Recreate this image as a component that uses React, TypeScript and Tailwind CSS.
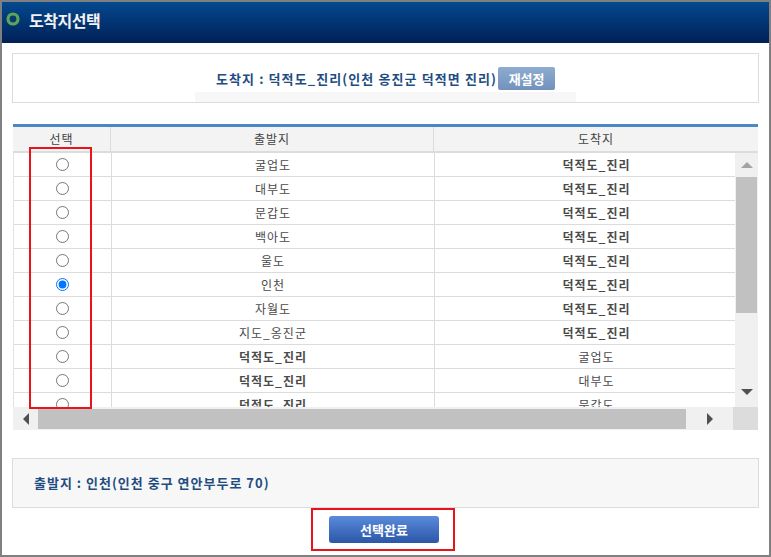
import React from "react";

type Row = {
  from: string;
  to: string;
  fromBold?: boolean;
  toBold?: boolean;
  checked?: boolean;
};

const rows: Row[] = [
  { from: "굴업도", to: "덕적도_진리", toBold: true },
  { from: "대부도", to: "덕적도_진리", toBold: true },
  { from: "문갑도", to: "덕적도_진리", toBold: true },
  { from: "백아도", to: "덕적도_진리", toBold: true },
  { from: "울도", to: "덕적도_진리", toBold: true },
  { from: "인천", to: "덕적도_진리", toBold: true, checked: true },
  { from: "자월도", to: "덕적도_진리", toBold: true },
  { from: "지도_옹진군", to: "덕적도_진리", toBold: true },
  { from: "덕적도_진리", to: "굴업도", fromBold: true },
  { from: "덕적도_진리", to: "대부도", fromBold: true },
  { from: "덕적도_진리", to: "문갑도", fromBold: true },
];

const font = { fontFamily: '"Noto Sans CJK KR", "Noto Sans", sans-serif' };

function Triangle({ dir }: { dir: "up" | "down" | "left" | "right" }) {
  const points = {
    up: "0,8 6,2 12,8",
    down: "0,2 6,8 12,2",
    left: "8,0 2,6 8,12",
    right: "2,0 8,6 2,12",
  }[dir];
  const vertical = dir === "up" || dir === "down";
  return (
    <svg
      width={vertical ? 12 : 10}
      height={vertical ? 10 : 12}
      viewBox={vertical ? "0 0 12 10" : "0 0 10 12"}
    >
      <polygon points={points} fill={dir === "up" ? "#a3a3a3" : "#505050"} />
    </svg>
  );
}

function TableRow({ row }: { row: Row }) {
  return (
    <div className="grid h-6 grid-cols-[98px_323px_323px] border-b border-[#dcdcdc] text-[12px] text-[#4a4a4a]">
      <div className="flex items-center justify-center border-r border-[#dcdcdc]">
        <input
          type="radio"
          name="arrival"
          defaultChecked={row.checked}
          className="m-0 h-[13px] w-[13px]"
        />
      </div>
      <div
        className={`flex items-center justify-center border-r border-[#dcdcdc] tracking-[1px] ${
          row.fromBold ? "font-bold" : ""
        }`}
      >
        {row.from}
      </div>
      <div
        className={`flex items-center justify-center tracking-[1px] ${
          row.toBold ? "font-bold" : ""
        }`}
      >
        {row.to}
      </div>
    </div>
  );
}

export default function App() {
  return (
    <div
      className="h-[557px] w-[771px] overflow-hidden border-2 border-[#808080] bg-white"
      style={font}
    >
      <header className="flex h-[41px] items-start gap-[9px] bg-gradient-to-b from-[#04498f] to-[#012057] pl-[4px] pt-[8px]">
        <svg width="14" height="14" viewBox="0 0 14 14" className="mt-[2px] shrink-0">
          <circle cx="7" cy="7" r="5" fill="#0b3a6e" stroke="#5ca55a" strokeWidth="3.2" />
        </svg>
        <h1 className="text-[16px] font-bold leading-[20px] tracking-[-0.5px] text-[#f2f2f2]">
          도착지선택
        </h1>
      </header>

      <div className="pl-[10px] pt-[10px]">
        <section className="flex h-[50px] w-[747px] flex-col items-center border border-[#dcdcdc] bg-white pt-[13px]">
          <div className="flex items-center gap-[1px]">
            <span className="text-[13px] font-bold tracking-[1.1px] text-[#1f4d82]">
              도착지 : 덕적도_진리(인천 옹진군 덕적면 진리)
            </span>
            <button
              type="button"
              className="h-[23px] w-[57px] rounded-[2px] bg-gradient-to-b from-[#8eacd0] to-[#7292bc] text-[13px] font-bold text-white"
            >
              재설정
            </button>
          </div>
          <div className="mt-[2px] h-[10px] w-[381px] bg-[#f7f7f7]" />
        </section>

        <div className="relative ml-[1px] mt-[21px] w-[745px]">
          <div className="h-[3px] bg-[#4a86c8]" />
          <div className="grid h-[26px] grid-cols-[98px_323px_324px] border-b-2 border-[#dcdcdc] bg-[#f3f3f3] text-[12px] text-[#444]">
            <div className="flex items-center justify-center border-r border-[#dcdcdc] tracking-[1px]">
              선택
            </div>
            <div className="flex items-center justify-center border-r border-[#dcdcdc] tracking-[1px]">
              출발지
            </div>
            <div className="flex items-center justify-center tracking-[1px]">
              도착지
            </div>
          </div>

          <div className="flex h-[254px]">
            <div className="w-[722px] overflow-hidden border-l border-[#e3e3e3]">
              <div className="w-[744px]">
                {rows.map((row, i) => (
                  <TableRow key={i} row={row} />
                ))}
              </div>
            </div>
            <div className="flex w-[23px] flex-col bg-[#f0f0f0]">
              <div className="flex h-6 items-center justify-center">
                <Triangle dir="up" />
              </div>
              <div className="mx-[1px] h-[136px] bg-[#c1c1c1]" />
              <div className="flex flex-1 items-end justify-center pb-[10px]">
                <Triangle dir="down" />
              </div>
            </div>
          </div>

          <div className="flex h-[23px]">
            <div className="flex w-[720px] items-center bg-[#f0f0f0]">
              <div className="flex w-[25px] items-center justify-center">
                <Triangle dir="left" />
              </div>
              <div className="h-[20px] w-[648px] bg-[#c1c1c1]" />
              <div className="flex flex-1 items-center justify-center">
                <Triangle dir="right" />
              </div>
            </div>
            <div className="flex-1 bg-[#dcdcdc]" />
          </div>

          <div className="absolute left-[16px] top-[23px] h-[262px] w-[63px] border-2 border-[#e8141c]" />
        </div>

        <section className="mt-[28px] flex h-[50px] w-[747px] items-center border border-[#dcdcdc] bg-[#f7f7f7] pl-[21px]">
          <span className="text-[13px] font-bold tracking-[1px] text-[#1f4d82]">
            출발지 : 인천(인천 중구 연안부두로 70)
          </span>
        </section>

        <div className="flex w-[747px] justify-center pr-[6px]">
          <div className="flex h-[43px] w-[144px] items-center justify-center border-2 border-[#e8141c] pl-[3px]">
            <button
              type="button"
              className="h-[27px] w-[110px] rounded-[3px] bg-gradient-to-b from-[#5a8bdb] to-[#2c57a8] text-[13px] font-bold text-white"
            >
              선택완료
            </button>
          </div>
        </div>
      </div>
    </div>
  );
}
